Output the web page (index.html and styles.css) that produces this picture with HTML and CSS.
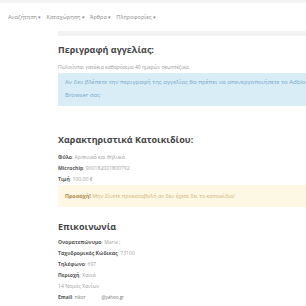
FILE: index.html
```html
<!DOCTYPE html>
<html lang="el">
<head>
<meta charset="utf-8">
<link rel="stylesheet" href="styles.css">
</head>
<body>
<div class="topline"></div>
<nav class="nav">
  <span class="nav-item">Αναζήτηση <span class="caret">▾</span></span>
  <span class="nav-item">Καταχώρηση <span class="caret">▾</span></span>
  <span class="nav-item">Άρθρα <span class="caret">▾</span></span>
  <span class="nav-item">Πληροφορίες <span class="caret">▾</span></span>
</nav>
<main class="main">
  <div class="graybar"></div>
  <section class="sec sec-desc">
    <h2 class="title">Περιγραφή αγγελίας:</h2>
    <p class="desc">Πωλούνται γατάκια καθαρόαιμα 40 ημερών σκωτσέζικα.</p>
    <div class="alert alert-info">Αν δεν βλέπετε την περιγραφή της αγγελίας θα πρέπει να απενεργοποιήσετε το Adblock του<br>Browser σας</div>
  </section>
  <section class="sec sec-pet">
    <h2 class="title">Χαρακτηριστικά Κατοικιδίου:</h2>
    <ul class="list">
      <li><b>Φύλο</b>: Αρσενικά και θηλυκά</li>
      <li><b>Microchip</b>: 900182001800792</li>
      <li><b>Τιμή</b>: 100.00 €</li>
    </ul>
    <div class="alert alert-warn"><b>Προσοχή!</b> Μην δίνετε προκαταβολή αν δεν έχετε δει το κατοικίδιο!</div>
  </section>
  <section class="sec sec-contact">
    <h2 class="title">Επικοινωνία</h2>
    <ul class="list">
      <li><b>Ονοματεπώνυμο</b>: Maria ;</li>
      <li><b>Ταχυδρομικός Κώδικας</b>: 73100</li>
      <li><b>Τηλέφωνο</b>: 697</li>
      <li><b>Περιοχή</b>: Χανιά</li>
      <li>14 Νομός Χανίων</li>
      <li><b>Email</b>: <span class="mail">nikor</span><span class="mail mail-dom">@yahoo.gr</span></li>
    </ul>
  </section>
</main>
</body>
</html>
```
FILE: styles.css
```css
html, body {
  margin: 0;
  padding: 0;
  background: #ffffff;
  font-family: "Open Sans", "Noto Sans", sans-serif;
}
.topline {
  height: 3px;
  background: #f4f4f4;
}
.nav {
  display: flex;
  gap: 5px;
  align-items: center;
  height: 28px;
  padding-left: 8px;
  font-size: 5.6px;
  color: #8a8a8a;
}
.caret {
  font-size: 4.5px;
}
.main {
  margin-left: 58px;
}
.graybar {
  height: 5px;
  background: #f3f3f3;
}
.title {
  margin: 0;
  font-size: 9px;
  font-weight: 700;
  color: #454545;
  line-height: 12px;
}
.sec-desc .title {
  margin-top: 8px;
}
.desc {
  margin: 7px 0 0;
  font-size: 5px;
  line-height: 8px;
  color: #9a9a9a;
}
.alert {
  font-size: 5.4px;
  line-height: 13px;
}
.alert-info {
  margin-top: 2px;
  background: #d9edf7;
  color: #78a9c8;
  font-size: 6px;
  padding: 3px 0 4px 7px;
  white-space: nowrap;
  overflow: hidden;
}
.sec-pet .title {
  margin-top: 28px;
}
.list {
  list-style: none;
  margin: 6px 0 0;
  padding: 0;
  font-size: 5.1px;
  line-height: 11px;
  color: #a0a0a0;
}
.list b {
  color: #555555;
  font-weight: 700;
}
.alert-warn {
  margin-top: 0;
  background: #fcf8e3;
  color: #d2b47a;
  padding: 5px 0 4px 7px;
}
.alert-warn b {
  color: #b08a48;
}
.sec-contact .title {
  margin-top: 14px;
}
.sec-contact .list {
  margin-top: 4px;
}
.mail {
  font-size: 4.5px;
  color: #777;
}
.mail-dom {
  margin-left: 16px;
}
```
